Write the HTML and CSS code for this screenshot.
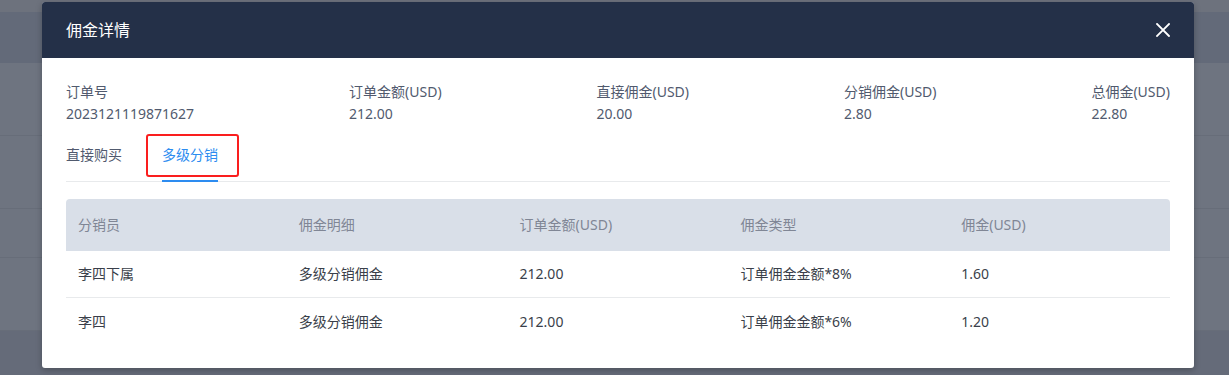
FILE: index.html
```html
<!DOCTYPE html>
<html lang="zh-CN">
<head>
<meta charset="utf-8">
<title>佣金详情</title>
<link rel="stylesheet" href="styles.css">
</head>
<body>
<div class="page">
  <div class="band band-top"></div>
  <div class="band band-head"></div>
  <div class="band band-row"></div>
  <div class="band band-row"></div>
  <div class="band band-row short"></div>
  <div class="band band-row"></div>
  <div class="band band-foot"></div>
</div>

<div class="modal">
  <div class="modal-header">
    <span class="modal-title">佣金详情</span>
    <svg class="modal-close" width="14" height="14" viewBox="0 0 14 14" aria-hidden="true">
      <path d="M1 1 L13 13 M13 1 L1 13" stroke="#ffffff" stroke-width="1.8" stroke-linecap="square" fill="none"/>
    </svg>
  </div>
  <div class="modal-body">
    <div class="summary">
      <div class="summary-item"><div class="summary-label">订单号</div><div class="summary-value">2023121119871627</div></div>
      <div class="summary-item"><div class="summary-label">订单金额(USD)</div><div class="summary-value">212.00</div></div>
      <div class="summary-item"><div class="summary-label">直接佣金(USD)</div><div class="summary-value">20.00</div></div>
      <div class="summary-item"><div class="summary-label">分销佣金(USD)</div><div class="summary-value">2.80</div></div>
      <div class="summary-item"><div class="summary-label">总佣金(USD)</div><div class="summary-value">22.80</div></div>
    </div>

    <div class="tabs">
      <div class="tab">直接购买</div>
      <div class="tab tab-active">多级分销</div>
      <div class="highlight-box"></div>
    </div>

    <table class="table">
      <thead>
        <tr>
          <th>分销员</th>
          <th>佣金明细</th>
          <th>订单金额(USD)</th>
          <th>佣金类型</th>
          <th>佣金(USD)</th>
        </tr>
      </thead>
      <tbody>
        <tr>
          <td>李四下属</td>
          <td>多级分销佣金</td>
          <td>212.00</td>
          <td>订单佣金金额*8%</td>
          <td>1.60</td>
        </tr>
        <tr class="last">
          <td>李四</td>
          <td>多级分销佣金</td>
          <td>212.00</td>
          <td>订单佣金金额*6%</td>
          <td>1.20</td>
        </tr>
      </tbody>
    </table>
  </div>
</div>
</body>
</html>
```

FILE: styles.css
```css
* { box-sizing: border-box; }

html, body {
  margin: 0;
  padding: 0;
  height: 100%;
}

body {
  font-family: "Noto Sans", "Noto Sans CJK SC", sans-serif;
  font-size: 14px;
  color: #515a6e;
  background: #6e7480;
  overflow: hidden;
  position: relative;
}

.page {
  display: flex;
  flex-direction: column;
}

.band { width: 100%; }
.band-top { height: 12px; background: #6d727d; }
.band-head { height: 51px; background: #636a79; }
.band-row { height: 73px; background: #6e7480; border-bottom: 1px solid #676d79; }
.band-row.short { height: 49px; }
.band-foot { height: 60px; background: #656b79; }

.modal {
  position: absolute;
  left: 42px;
  top: 2px;
  width: 1152px;
  background: #ffffff;
  border-radius: 3px;
  box-shadow: 0 2px 6px rgba(0, 0, 0, 0.25);
  overflow: hidden;
}

.modal-header {
  height: 56px;
  background: #243048;
  display: flex;
  align-items: center;
  justify-content: space-between;
  padding: 0 24px 0 24px;
}

.modal-title {
  color: #ffffff;
  font-size: 16px;
  line-height: 22px;
}

.modal-close {
  display: block;
}

.modal-body {
  padding: 23px 24px 23px 24px;
}

.summary {
  display: flex;
  justify-content: space-between;
}

.summary-item {
  line-height: 22px;
  color: #515a6e;
}

.summary-label,
.summary-value {
  white-space: nowrap;
}

.tabs {
  position: relative;
  display: flex;
  margin-top: 11px;
  border-bottom: 1px solid #e8eaec;
}

.tab {
  position: relative;
  padding: 8px 0 15px;
  margin-right: 40px;
  line-height: 22px;
  color: #515a6e;
}

.tab-active {
  color: #2d8cf0;
}

.tab-active::after {
  content: "";
  position: absolute;
  left: 0;
  right: 0;
  bottom: -1px;
  height: 2px;
  background: #2d8cf0;
}

.highlight-box {
  position: absolute;
  left: 80px;
  top: -2px;
  width: 93px;
  height: 43px;
  border: 2px solid #fa1e1e;
  border-radius: 3px;
}

.table {
  width: 100%;
  margin-top: 17px;
  border-collapse: separate;
  border-spacing: 0;
  table-layout: fixed;
}

.table th {
  background: #d9dfe8;
  color: #808695;
  font-weight: normal;
  text-align: left;
  height: 52px;
  padding: 0 12px;
  line-height: 22px;
}

.table th:first-child { border-top-left-radius: 4px; }
.table th:last-child { border-top-right-radius: 4px; }

.table td {
  height: 47px;
  padding: 0 12px;
  color: #3a3f4a;
  line-height: 22px;
  border-bottom: 1px solid #e8eaec;
}

.table tr.last td {
  border-bottom: none;
}
```
